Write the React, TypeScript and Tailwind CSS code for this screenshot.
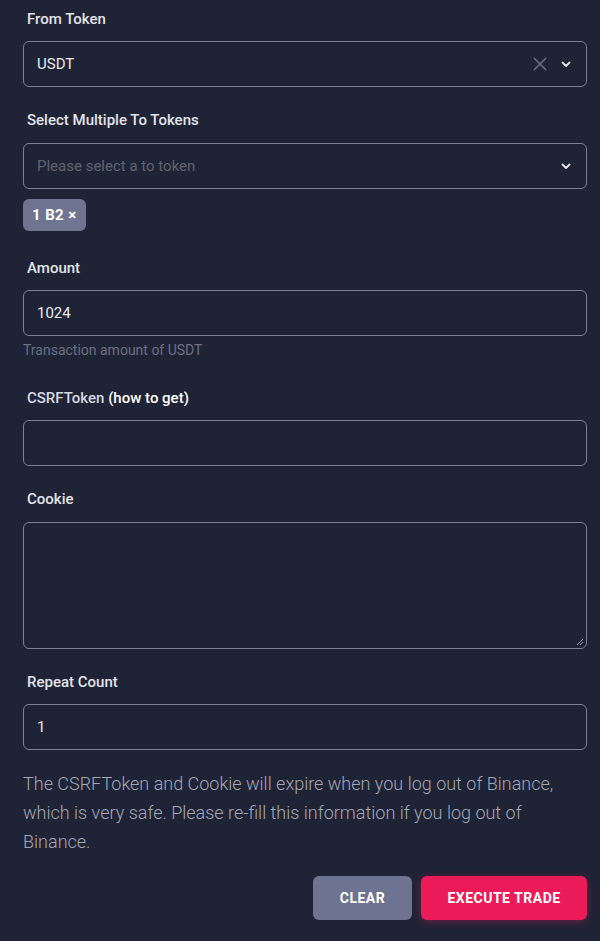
import React from "react";

function Chevron() {
  return (
    <svg width="12" height="12" viewBox="0 0 12 12" fill="none" stroke="#e5e7eb" strokeWidth="1.8" strokeLinecap="round" strokeLinejoin="round">
      <path d="M2.5 4.5 L6 8 L9.5 4.5" />
    </svg>
  );
}

function Label({ children }: { children: React.ReactNode }) {
  return <div className="pl-1 text-[15px] font-medium leading-[20px] text-[#e2e4ea]">{children}</div>;
}

const box = "w-full rounded-[6px] border border-[#7d8190] bg-transparent";

export default function App() {
  return (
    <div className="h-[941px] w-full overflow-hidden bg-[#1f2336] pl-[23px] pr-[13px] pt-[9px] font-['Roboto',sans-serif] text-[#e5e7eb]">
      <Label>From Token</Label>
      <div className={`${box} mt-[12px] flex h-[46px] items-center pl-[13px] pr-[14px]`}>
        <span className="flex-1 text-[15px] text-[#e9eaee]">USDT</span>
        <svg width="16" height="16" viewBox="0 0 16 16" stroke="#6b6f7c" strokeWidth="1.6" className="mr-[12px]">
          <path d="M2 2 L14 14 M14 2 L2 14" />
        </svg>
        <Chevron />
      </div>

      <div className="mt-[23px]">
        <Label>Select Multiple To Tokens</Label>
      </div>
      <div className={`${box} mt-[13px] flex h-[46px] items-center pl-[13px] pr-[14px]`}>
        <span className="flex-1 text-[15px] text-[#5f6372]">Please select a to token</span>
        <Chevron />
      </div>
      <div className="mt-[10px] flex">
        <div className="flex h-[32px] items-center rounded-[6px] bg-[#6f7490] px-[9px] text-[15px] font-bold tracking-[0.4px] text-white">
          1 B2 ×
        </div>
      </div>

      <div className="mt-[27px]">
        <Label>Amount</Label>
      </div>
      <div className={`${box} mt-[12px] flex h-[46px] items-center pl-[13px]`}>
        <span className="text-[15px] text-[#e9eaee]">1024</span>
      </div>
      <div className="mt-[4px] text-[14px] leading-[20px] text-[#6c7080]">Transaction amount of USDT</div>

      <div className="mt-[28px]">
        <Label>
          <span className="text-[#d6d9e2]">CSRFToken</span> <span className="text-white">(how to get)</span>
        </Label>
      </div>
      <div className={`${box} mt-[12px] h-[46px]`} />

      <div className="mt-[23px]">
        <Label>Cookie</Label>
      </div>
      <div className={`${box} relative mt-[13px] h-[127px]`}>
        <svg width="8" height="8" viewBox="0 0 8 8" stroke="#9ca0ad" strokeWidth="1" className="absolute bottom-[2px] right-[2px]">
          <path d="M7 1 L1 7 M7 4 L4 7" />
        </svg>
      </div>

      <div className="mt-[23px]">
        <Label>Repeat Count</Label>
      </div>
      <div className={`${box} mt-[12px] flex h-[46px] items-center pl-[13px]`}>
        <span className="text-[15px] text-[#e9eaee]">1</span>
      </div>

      <p className="mt-[19px] text-[18px] font-light leading-[29px] text-[#a4a8b5]">
        The CSRFToken and Cookie will expire when you log out of Binance, which is very safe. Please re-fill this information if you log out of Binance.
      </p>

      <div className="mt-[20px] flex justify-end gap-[9px]">
        <button className="h-[44px] w-[99px] rounded-[6px] bg-[#6e7391] text-[14px] font-bold tracking-[0.5px] text-white">
          CLEAR
        </button>
        <button className="h-[44px] w-[166px] rounded-[6px] bg-[#eb1b5a] text-[14px] font-bold tracking-[0.5px] text-white shadow-[0_2px_8px_rgba(235,27,90,0.35)]">
          EXECUTE TRADE
        </button>
      </div>
    </div>
  );
}
